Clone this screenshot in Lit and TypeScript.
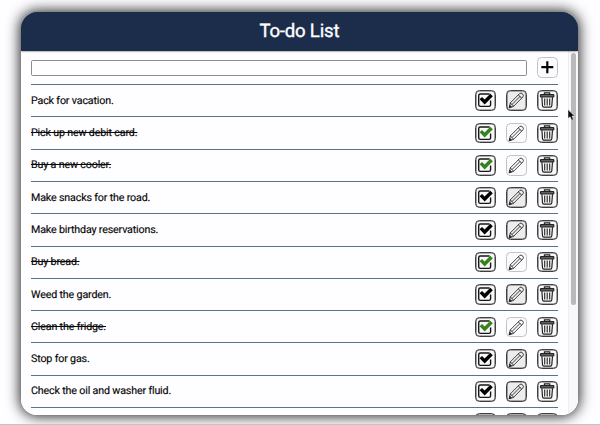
import { LitElement, html, css, svg } from "lit";
import { customElement, property } from "lit/decorators.js";
import { classMap } from "lit/directives/class-map.js";

interface Task {
  text: string;
  done: boolean;
}

const TASKS: Task[] = [
  { text: "Pack for vacation.", done: false },
  { text: "Pick up new debit card.", done: true },
  { text: "Buy a new cooler.", done: true },
  { text: "Make snacks for the road.", done: false },
  { text: "Make birthday reservations.", done: false },
  { text: "Buy bread.", done: true },
  { text: "Weed the garden.", done: false },
  { text: "Clean the fridge.", done: true },
  { text: "Stop for gas.", done: false },
  { text: "Check the oil and washer fluid.", done: false },
  { text: "", done: false },
];

const checkIcon = svg`
  <path d="M14.6 4H5.4Q3.7 4 3.7 5.7V14.7Q3.7 16.4 5.4 16.4H13.9Q15.6 16.4 15.6 14.7V10.6" fill="none" stroke="#151515" stroke-width="1.4"/>
  <path class="tick" d="M4.6 9.2L7 6.9L9.6 9.5L15.3 3.7L17.8 6.3L9.7 14.6Z"/>`;

const pencilIcon = svg`
  <g fill="none" stroke="#222" stroke-width=".85" stroke-linejoin="round" stroke-linecap="round">
    <path d="M3.3 17.3L4.3 12.9L13.6 3.6Q15 2.4 16.5 3.8Q18.1 5.4 16.9 6.9L7.7 16.2Z"/>
    <path d="M12.3 4.9L15.7 8.2M4.3 12.9L7.7 16.2M6 14.5L14 6.5"/>
    <path d="M3.3 17.3L3.8 15.2L5.3 16.7Z" fill="#222"/>
  </g>`;

const trashIcon = svg`
  <g fill="none" stroke="#222" stroke-width="1.2" stroke-linejoin="round">
    <path d="M7.4 4.8V2.9H12.8V4.8"/>
    <rect x="3.5" y="4.7" width="13.3" height="2.1" rx=".6" fill="#777"/>
    <path d="M4.9 7.3L5.5 15.8Q5.6 17.1 6.9 17.1H13.4Q14.7 17.1 14.8 15.8L15.5 7.3"/>
    <path d="M7.7 8.6V15.4M10.2 8.6V15.4M12.7 8.6V15.4" stroke-width="1.1"/>
  </g>`;

const plusIcon = svg`<path d="M10.3 4.2V16.2M4.3 10.2H16.3" stroke="#050505" stroke-width="2.2" fill="none"/>`;

@customElement("todo-button")
class TodoButton extends LitElement {
  @property() kind = "check";
  @property({ type: Boolean }) done = false;

  static styles = css`
    :host { display: block; width: 20.5px; height: 20.5px; }
    button {
      display: block; width: 100%; height: 100%; box-sizing: border-box;
      margin: 0; padding: 0; border: 1px solid #404040; border-radius: 4.5px;
      background: #f8f8fa;
      box-shadow: inset 0 0 0 .6px #666;
    }
    svg { display: block; width: 20.5px; height: 20.5px; margin: -1px; }
    .tick { fill: #000; }
    .done .tick { fill: #35831a; }
    .pencil { background: #ececec; }
    .pencil.done, .plus { border: 1px solid #c2c2c6; background: #fbfafc; box-shadow: none; }
  `;

  render() {
    const icon = { check: checkIcon, pencil: pencilIcon, trash: trashIcon, plus: plusIcon }[this.kind];
    return html`<button class=${classMap({ [this.kind]: true, done: this.done })}>
      <svg viewBox="0 0 20.5 20.5">${icon}</svg>
    </button>`;
  }
}

@customElement("app-root")
class AppRoot extends LitElement {
  static styles = css`
    :host {
      display: block; box-sizing: border-box; height: 425px; overflow: hidden;
      padding: 12px 22px 0 20.7px; background: #fefdff; position: relative;
      font-family: Roboto, sans-serif; color: #080808;
      text-rendering: geometricPrecision;
      border-bottom: 1px solid #c4c3c6;
    }
    .card {
      display: flex; flex-direction: column; height: 402.5px;
      border-radius: 16px; overflow: hidden; background: #fefdff;
    }
    .shadow { border-radius: 16px; box-shadow: 0 0 14px 1px rgba(0, 0, 0, .9); }
    header {
      flex: none; height: 39.4px; background: #1b2d4b; color: #fefefe;
      display: flex; align-items: center; justify-content: center;
      box-shadow: 0 0 2px rgba(0, 0, 0, .7); z-index: 1;
    }
    h1 {
      margin: 0; font-size: 18.6px; line-height: 22px; font-weight: 400;
      padding-bottom: 2px; letter-spacing: -.2px; -webkit-text-stroke: .35px #fefefe;
    }
    .body { flex: 1; min-height: 0; display: flex; }
    .list { flex: 1; min-width: 0; overflow: hidden; padding: 0 10.4px 0 10.3px; }
    .add { display: flex; align-items: center; gap: 10.5px; height: 32.7px; }
    input {
      flex: 1; min-width: 0; height: 16px; box-sizing: border-box; padding: 0 2px;
      border: 1px solid #8d8b90; border-radius: 1.5px; background: #fefdff;
    }
    .row {
      display: flex; align-items: center; gap: 10.4px; height: 32.3px;
      box-sizing: border-box; border-top: 1px solid #5f7186;
    }
    .text {
      flex: 1; font-size: 10.7px; line-height: 14px; letter-spacing: -.16px;
      -webkit-text-stroke: .15px #080808;
    }
    .done .text { text-decoration: line-through; }
    .track {
      flex: none; width: 10px; box-sizing: border-box; padding: 2px 2px 0 2px;
      background: #f8f7f9; border-left: 1px solid #eeedef;
    }
    .thumb { height: 252px; border-radius: 3px; background: #b9b8bb; }
    .cursor { position: absolute; left: 566.5px; top: 108px; width: 10px; height: 14px; }
  `;

  render() {
    return html`
      <div class="shadow">
        <div class="card">
          <header><h1>To-do List</h1></header>
          <div class="body">
            <div class="list">
              <div class="add">
                <input type="text" />
                <todo-button kind="plus"></todo-button>
              </div>
              ${TASKS.map(
                (t) => html`<div class=${classMap({ row: true, done: t.done })}>
                  <span class="text">${t.text}</span>
                  <todo-button kind="check" ?done=${t.done}></todo-button>
                  <todo-button kind="pencil" ?done=${t.done}></todo-button>
                  <todo-button kind="trash"></todo-button>
                </div>`
              )}
            </div>
            <div class="track"><div class="thumb"></div></div>
          </div>
        </div>
      </div>
      <svg class="cursor" viewBox="0 0 10 14">
        <path d="M1 1.5V10.6L3.1 8.8L4.7 12.2L6.4 11.4L5 8.1H7.6Z" fill="#080808" stroke="#fff" stroke-width=".5"/>
      </svg>
    `;
  }
}
